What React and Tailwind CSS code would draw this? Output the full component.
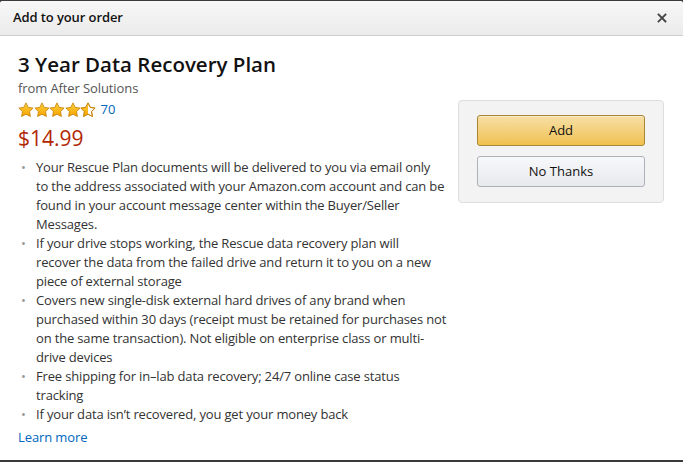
import React from "react";

function Star({ fill = "full", id }) {
  const d = "M8 0.9l2.2 4.5 4.9.7-3.55 3.45.85 4.9L8 12.15l-4.4 2.3.85-4.9L.9 6.1l4.9-.7z";
  return (
    <svg width="16" height="16" viewBox="0 0 16 16" className="-mr-[0.5px]">
      <defs>
        <linearGradient id={`g${id}`} x1="0" y1="0" x2="0" y2="1">
          <stop offset="0" stopColor="#ffd23f" />
          <stop offset="1" stopColor="#f5a300" />
        </linearGradient>
        <clipPath id={`c${id}`}>
          <rect x="0" y="0" width="8" height="16" />
        </clipPath>
      </defs>
      {fill === "full" ? (
        <path d={d} fill={`url(#g${id})`} stroke="#c8860d" strokeWidth="0.9" strokeLinejoin="round" />
      ) : (
        <>
          <path d={d} fill="#fff" stroke="#c8860d" strokeWidth="0.9" strokeLinejoin="round" />
          <path d={d} fill={`url(#g${id})`} clipPath={`url(#c${id})`} />
          <path d={d} fill="none" stroke="#c8860d" strokeWidth="0.9" strokeLinejoin="round" />
        </>
      )}
    </svg>
  );
}

const bullets = [
  [
    "Your Rescue Plan documents will be delivered to you via email only",
    "to the address associated with your Amazon.com account and can be",
    "found in your account message center within the Buyer/Seller",
    "Messages.",
  ],
  [
    "If your drive stops working, the Rescue data recovery plan will",
    "recover the data from the failed drive and return it to you on a new",
    "piece of external storage",
  ],
  [
    "Covers new single-disk external hard drives of any brand when",
    "purchased within 30 days (receipt must be retained for purchases not",
    "on the same transaction). Not eligible on enterprise class or multi-",
    "drive devices",
  ],
  ["Free shipping for in\u2013lab data recovery; 24/7 online case status", "tracking"],
  ["If your data isn\u2019t recovered, you get your money back"],
];

export default function App() {
  return (
    <div
      className="w-[683px] h-[462px] bg-[#3a3a3a] pt-px pb-[2px] overflow-hidden"
      style={{ fontFamily: "'Open Sans', 'Noto Sans', Arial, sans-serif" }}
    >
      <div className="h-[459px] bg-white rounded-t-[3px] flex flex-col">
        <div className="h-[35px] shrink-0 flex items-center justify-between pl-[13px] pr-[14px] bg-gradient-to-b from-[#f7f7f7] to-[#ebebeb] border-b border-[#cfcfcf] rounded-t-[3px]">
          <span className="text-[13px] font-semibold text-[#111] tracking-[-0.1px]">Add to your order</span>
          <svg width="10" height="10" viewBox="0 0 10 10" className="mr-[2px]">
            <path d="M1.5 1.5l7 7M8.5 1.5l-7 7" stroke="#444" strokeWidth="1.8" strokeLinecap="square" />
          </svg>
        </div>
        <div className="flex pl-[18px] pr-[18px] pt-[14px]">
          <div className="w-[440px] shrink-0">
            <h1 className="text-[20.5px] leading-[28px] font-semibold text-[#111]">3 Year Data Recovery Plan</h1>
            <div className="text-[13px] leading-[18px] text-[#555] mt-[1px] tracking-[-0.1px]">from After Solutions</div>
            <div className="flex items-center mt-[4px] h-[18px]">
              <Star id="a" />
              <Star id="b" />
              <Star id="c" />
              <Star id="d" />
              <Star id="e" fill="half" />
              <span className="ml-[5px] text-[13px] text-[#0066c0]">70</span>
            </div>
            <div className="text-[21px] leading-[28px] text-[#b12704] mt-[5px]">$14.99</div>
            <ul className="mt-[6px] text-[13px] leading-[19px] text-[#333] tracking-[-0.16px]">
              {bullets.map((lines, i) => (
                <li key={i} className="flex">
                  <span className="w-[18px] shrink-0 pl-[3px] text-[#999]">•</span>
                  <span className="flex flex-col">
                    {lines.map((l, j) => (
                      <span key={j} className="whitespace-nowrap">{l}</span>
                    ))}
                  </span>
                </li>
              ))}
            </ul>
            <div className="mt-[4px] text-[13px] leading-[19px] text-[#0066c0] tracking-[-0.1px]">Learn more</div>
          </div>
          <div className="flex-1 pt-[50px]">
            <div className="w-[206px] bg-[#f3f3f3] border border-[#dddddd] rounded-[4px] px-[18px] pt-[14px] pb-[15px] flex flex-col gap-[10px]">
              <button className="h-[31px] w-full rounded-[3px] border border-[#a88734] bg-gradient-to-b from-[#f7dfa5] to-[#f0c14b] text-[13px] text-[#111] shadow-[inset_0_1px_0_rgba(255,255,255,0.4)]">
                Add
              </button>
              <button className="h-[31px] w-full rounded-[3px] border border-[#adb1b8] bg-gradient-to-b from-[#f7f8fa] to-[#e7e9ec] text-[13px] text-[#111]">
                No Thanks
              </button>
            </div>
          </div>
        </div>
      </div>
    </div>
  );
}
